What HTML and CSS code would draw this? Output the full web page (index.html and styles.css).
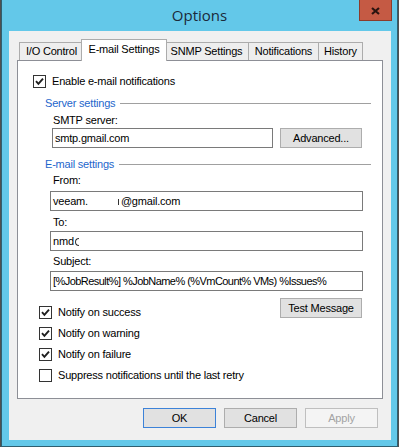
FILE: index.html
```html
<!DOCTYPE html>
<html>
  <head>
    <title>Options</title>
    <link rel="stylesheet" href="styles.css">
  </head>
  <body>
    <div class="window">
      <div class="titlebar">
        <div></div>
        <div class="title">Options</div>
        <div class="close">
          <svg width="9" height="8" viewBox="0 0 9 8">
            <path d="M1 1 L8 7 M8 1 L1 7" stroke="#2b1410" stroke-width="2.2" fill="none" />
          </svg>
        </div>
      </div>

      <div class="client">
        <div class="tabs">
          <div class="tab tab-io">I/O Control</div>
          <div class="tab tab-email active">E-mail Settings</div>
          <div class="tab tab-snmp">SNMP Settings</div>
          <div class="tab tab-notif">Notifications</div>
          <div class="tab tab-history">History</div>
        </div>

        <div class="panel">
          <div class="check-row enable-row">
            <span class="box checked">
              <svg width="11" height="11" viewBox="0 0 11 11"><path d="M2 5.2 L4.4 7.8 L9 2.6" /></svg>
            </span>
            <span>Enable e-mail notifications</span>
          </div>

          <div class="group-head server-head">
            <span>Server settings</span>
            <span class="rule"></span>
          </div>
          <div class="label smtp-label">SMTP server:</div>
          <div class="smtp-row">
            <div class="input smtp-input">smtp.gmail.com</div>
            <div class="button advanced">Advanced...</div>
          </div>

          <div class="group-head email-head">
            <span>E-mail settings</span>
            <span class="rule"></span>
          </div>
          <div class="label from-label">From:</div>
          <div class="input wide from-input">veeam.<span class="blank"></span><span class="stub"></span>@gmail.com</div>
          <div class="label to-label">To:</div>
          <div class="input wide to-input">nmd<span class="half-at"></span></div>
          <div class="label subject-label">Subject:</div>
          <div class="input wide subject-input">[%JobResult%] %JobName% (%VmCount% VMs) %Issues%</div>

          <div class="notify-area">
            <div class="notify-list">
              <div class="check-row">
                <span class="box checked">
                  <svg width="11" height="11" viewBox="0 0 11 11"><path d="M2 5.2 L4.4 7.8 L9 2.6" /></svg>
                </span>
                <span>Notify on success</span>
              </div>
              <div class="check-row">
                <span class="box checked">
                  <svg width="11" height="11" viewBox="0 0 11 11"><path d="M2 5.2 L4.4 7.8 L9 2.6" /></svg>
                </span>
                <span>Notify on warning</span>
              </div>
              <div class="check-row">
                <span class="box checked">
                  <svg width="11" height="11" viewBox="0 0 11 11"><path d="M2 5.2 L4.4 7.8 L9 2.6" /></svg>
                </span>
                <span>Notify on failure</span>
              </div>
              <div class="check-row suppress-row">
                <span class="box"></span>
                <span>Suppress notifications until the last retry</span>
              </div>
            </div>
            <div class="button test-button">Test Message</div>
          </div>
        </div>

        <div class="buttons">
          <div class="button dialog default">OK</div>
          <div class="button dialog">Cancel</div>
          <div class="button dialog disabled">Apply</div>
        </div>
      </div>
    </div>
  </body>
</html>
```

FILE: styles.css
```css
body {
  margin: 0;
  background-color: #505050;
  font-family: "Liberation Sans", Arial, sans-serif;
  font-size: 11px;
  letter-spacing: -0.2px;
  color: #000;
}
.window {
  margin-left: 1px;
  width: 395px;
  border: 1px solid #2f5f70;
  border-top: 0;
  background-color: #63c8e9;
  padding-bottom: 6px;
}

/* title bar */
.titlebar {
  height: 31px;
  display: grid;
  grid-template-columns: 1fr auto 1fr;
}
.title {
  font-family: "Open Sans", "Liberation Sans", sans-serif;
  font-size: 15px;
  letter-spacing: 0;
  line-height: 31px;
  color: #1b2a3a;
}
.close {
  justify-self: end;
  width: 33px;
  height: 21px;
  box-sizing: border-box;
  margin-right: 5px;
  background-color: #c55a44;
  border: 1px solid #8c3c2c;
  border-top: 0;
  display: flex;
  align-items: center;
  justify-content: center;
  padding-top: 2px;
}

/* client area */
.client {
  margin: 0 6px 0 7px;
  height: 409px;
  box-sizing: border-box;
  padding-top: 8px;
  background-color: #f0f0f0;
}

.tabs {
  display: flex;
  align-items: flex-end;
  height: 22px;
  margin: 0 0 -1px 10px;
  position: relative;
  z-index: 1;
}
.tab {
  height: 18px;
  box-sizing: border-box;
  border: 1px solid #acacac;
  border-bottom: 0;
  background-color: #eeeeee;
  margin-bottom: 1px;
  margin-left: -1px;
  text-align: center;
  line-height: 17px;
  white-space: nowrap;
}
.tab-io {
  width: 65px;
  margin-left: 0;
}
.tab-email {
  width: 86px;
}
.tab-snmp {
  width: 85px;
}
.tab-notif {
  width: 71px;
}
.tab-history {
  width: 45px;
}
.tab.active {
  height: 22px;
  margin: 0 -2px 0 -3px;
  background-color: #fff;
  line-height: 19px;
  position: relative;
  z-index: 2;
}

.panel {
  margin: 0 8px;
  height: 339px;
  box-sizing: border-box;
  border: 1px solid #8d8f96;
  background-color: #fff;
}

/* rows */
.check-row {
  display: flex;
  align-items: center;
  height: 13px;
  line-height: 13px;
  white-space: nowrap;
}
.box {
  width: 13px;
  height: 13px;
  box-sizing: border-box;
  border: 1px solid #333;
  background-color: #fff;
  margin-right: 6px;
  flex-shrink: 0;
}
.box svg {
  display: block;
}
.box path {
  fill: none;
  stroke: #1e1e1e;
  stroke-width: 1.9;
}
.enable-row {
  margin: 14px 0 0 15px;
}

.group-head {
  display: flex;
  align-items: center;
  height: 13px;
  line-height: 13px;
  margin: 0 11px 0 27px;
  color: #1e66cc;
}
.rule {
  flex: 1;
  height: 1px;
  margin-left: 5px;
  background-color: #a0a0a0;
}
.server-head {
  margin-top: 9px;
}
.email-head {
  margin-top: 10px;
}

.label {
  height: 13px;
  line-height: 13px;
  margin-left: 35px;
}
.smtp-label {
  margin-top: 4px;
}
.from-label {
  margin-top: 3px;
}
.to-label {
  margin-top: 5px;
}
.subject-label {
  margin-top: 4px;
}

.input {
  height: 20px;
  box-sizing: border-box;
  border: 1px solid #7a7a7a;
  background-color: #fff;
  padding-left: 2px;
  line-height: 18px;
  white-space: nowrap;
  overflow: hidden;
}
.input.wide {
  width: 313px;
  margin-left: 32px;
}
.from-input {
  margin-top: 4px;
}
.to-input {
  margin-top: 2px;
}
.subject-input {
  margin-top: 3px;
  letter-spacing: -0.55px;
}
.blank {
  display: inline-block;
  width: 30px;
}
/* redacted bits of the addresses */
.stub {
  display: inline-block;
  width: 1px;
  height: 6px;
  margin-right: 2px;
  background-color: #333;
  vertical-align: 0;
}
.half-at {
  display: inline-block;
  width: 4px;
  height: 8px;
  margin-left: 1px;
  box-sizing: border-box;
  border: 1px solid #333;
  border-right: 0;
  border-radius: 4px 0 0 4px;
  vertical-align: -1px;
}

.smtp-row {
  display: flex;
  margin: 1px 0 0 34px;
}
.smtp-input {
  width: 221px;
}

.button {
  height: 20px;
  box-sizing: border-box;
  border: 1px solid #adadad;
  background-color: #e1e1e1;
  text-align: center;
  line-height: 18px;
  white-space: nowrap;
}
.advanced {
  width: 82px;
  margin-left: 7px;
}

.notify-area {
  display: flex;
  justify-content: space-between;
  align-items: flex-start;
  margin: 7px 20px 0 21px;
}
.notify-list {
  padding-top: 8px;
}
.notify-list .check-row {
  margin-bottom: 8px;
}
.notify-list .suppress-row {
  margin-top: 2px;
}
.test-button {
  width: 82px;
}

.buttons {
  display: flex;
  justify-content: flex-end;
  gap: 8px;
  margin: 9px 13px 0 0;
}
.button.dialog {
  width: 73px;
}
.button.default {
  border-color: #3c82d8;
}
.button.disabled {
  background-color: #f4f4f4;
  border-color: #bfbfbf;
  color: #a3a3a3;
}
```
